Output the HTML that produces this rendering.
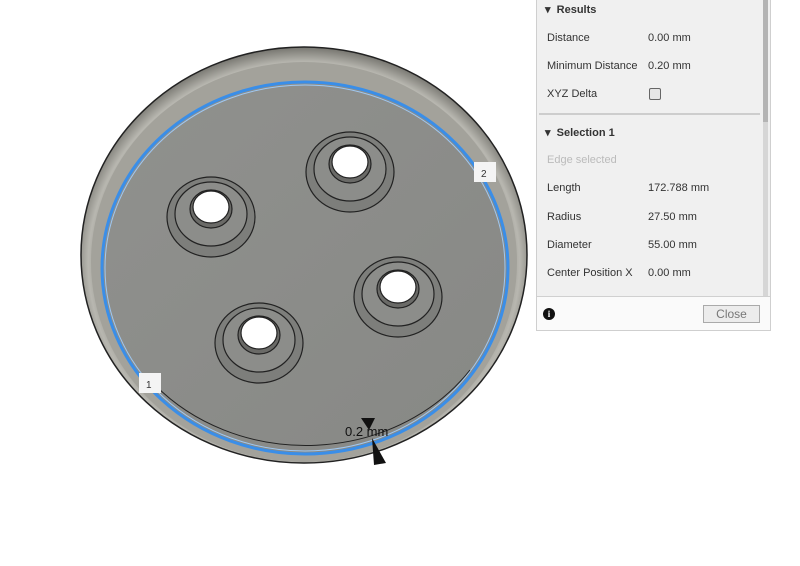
<!DOCTYPE html>
<html><head><style>
body{margin:0;width:800px;height:566px;background:#fff;position:relative;overflow:hidden;font-family:"Liberation Sans",sans-serif;}
.p{position:absolute;left:536px;top:-1px;width:235px;height:332px;background:#f0f0f0;border:1px solid #cfcfcf;box-sizing:border-box;}
.t{position:absolute;font-size:11px;color:#333;}
.h{font-weight:bold;}
</style></head><body>
<svg width="800" height="566" style="position:absolute;left:0;top:0">
<defs>
<radialGradient id="rim" cx="50%" cy="52%" r="52%">
<stop offset="85%" stop-color="#8a8983"/><stop offset="93%" stop-color="#b8b7b0"/><stop offset="100%" stop-color="#76756f"/>
</radialGradient>
<linearGradient id="fl" x1="0" y1="0" x2="1" y2="1"><stop offset="0" stop-color="#90918e"/><stop offset="1" stop-color="#878885"/></linearGradient>
</defs>
<ellipse cx="304" cy="255" rx="223" ry="208" fill="url(#rim)" stroke="#222" stroke-width="1.5"/>
<ellipse cx="304" cy="262" rx="213" ry="200" fill="#a3a29b"/>
<ellipse cx="305" cy="268" rx="203" ry="186" fill="url(#fl)" stroke="#3a8ee8" stroke-width="3"/>
<ellipse cx="305" cy="268" rx="200" ry="183" fill="none" stroke="#9fc8f2" stroke-width="1"/>
<path d="M155 385 A 200 176 0 0 0 470 370" fill="none" stroke="#222" stroke-width="1"/>
<g stroke="#222" stroke-width="1.2">
<g transform="translate(211,217)"><ellipse rx="44" ry="40" fill="#7d7e7b"/><ellipse rx="36" ry="32" cy="-3" fill="#8c8d8a"/><ellipse rx="21" ry="19" cy="-8" fill="#6a6a67"/><ellipse rx="18" ry="16" cy="-10" fill="#fff"/></g>
<g transform="translate(350,172)"><ellipse rx="44" ry="40" fill="#7d7e7b"/><ellipse rx="36" ry="32" cy="-3" fill="#8c8d8a"/><ellipse rx="21" ry="19" cy="-8" fill="#6a6a67"/><ellipse rx="18" ry="16" cy="-10" fill="#fff"/></g>
<g transform="translate(398,297)"><ellipse rx="44" ry="40" fill="#7d7e7b"/><ellipse rx="36" ry="32" cy="-3" fill="#8c8d8a"/><ellipse rx="21" ry="19" cy="-8" fill="#6a6a67"/><ellipse rx="18" ry="16" cy="-10" fill="#fff"/></g>
<g transform="translate(259,343)"><ellipse rx="44" ry="40" fill="#7d7e7b"/><ellipse rx="36" ry="32" cy="-3" fill="#8c8d8a"/><ellipse rx="21" ry="19" cy="-8" fill="#6a6a67"/><ellipse rx="18" ry="16" cy="-10" fill="#fff"/></g>
</g>
<path d="M361 418 L375 418 L369 430 Z M372 438 L386 463 L374 465 Z" fill="#111"/>
<text x="345" y="436" font-size="13" font-family="Liberation Sans" fill="#111">0.2 mm</text>
<rect x="474" y="162" width="22" height="20" fill="#f4f4f4"/><text x="481" y="177" font-size="10" font-family="Liberation Sans" fill="#333">2</text>
<rect x="139" y="373" width="22" height="20" fill="#f4f4f4"/><text x="146" y="388" font-size="10" font-family="Liberation Sans" fill="#333">1</text>
</svg>
<div class="p">
<div style="position:absolute;left:226px;top:0;width:5px;height:296px;background:#d6d6d6"></div>
<div style="position:absolute;left:226px;top:0;width:5px;height:122px;background:#b4b4b4"></div>
<div style="position:absolute;left:2px;top:113px;width:221px;height:2px;background:#cdcdcd"></div>
<div style="position:absolute;left:0;top:296px;width:233px;height:1px;background:#d0d0d0"></div>
<div style="position:absolute;left:0;top:297px;width:233px;height:33px;background:#fafafa"></div>
</div>
<div class="t h" style="left:545px;top:3px">▾&nbsp; Results</div>
<div class="t" style="left:547px;top:32px">Distance</div><div class="t" style="left:648px;top:32px">0.00 mm</div>
<div class="t" style="left:547px;top:60px">Minimum Distance</div><div class="t" style="left:648px;top:60px">0.20 mm</div>
<div class="t" style="left:547px;top:88px">XYZ Delta</div>
<div style="position:absolute;left:649px;top:88px;width:10px;height:10px;border:1px solid #666;border-radius:2px;background:#e6e6e6"></div>
<div class="t h" style="left:545px;top:126px">▾&nbsp; Selection 1</div>
<div class="t" style="left:547px;top:154px;color:#bbb">Edge selected</div>
<div class="t" style="left:547px;top:182px">Length</div><div class="t" style="left:648px;top:182px">172.788 mm</div>
<div class="t" style="left:547px;top:211px">Radius</div><div class="t" style="left:648px;top:211px">27.50 mm</div>
<div class="t" style="left:547px;top:239px">Diameter</div><div class="t" style="left:648px;top:239px">55.00 mm</div>
<div class="t" style="left:547px;top:267px">Center Position X</div><div class="t" style="left:648px;top:267px">0.00 mm</div>
<div style="position:absolute;left:543px;top:308px;width:12px;height:12px;border-radius:50%;background:#111;color:#fff;font-size:9px;font-weight:bold;text-align:center;line-height:12px;font-family:'Liberation Serif',serif">i</div>
<div style="position:absolute;left:703px;top:305px;width:55px;height:16px;border:1px solid #aaa;background:#ececec;color:#777;font-size:12px;text-align:center;line-height:16px">Close</div>
</body></html>
